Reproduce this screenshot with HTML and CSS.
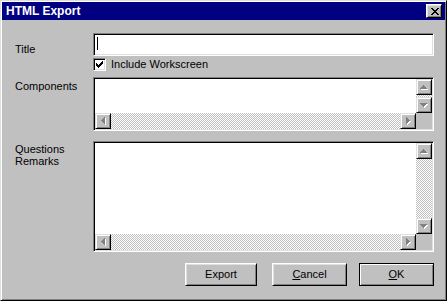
FILE: index.html
```html
<!DOCTYPE html>
<html>
<head>
<meta charset="utf-8">
<title>HTML Export</title>
<link rel="stylesheet" href="styles.css">
</head>
<body>
<div class="window">
  <div class="titlebar">
    <span class="title">HTML Export</span>
    <span class="close">
      <svg width="8" height="7" viewBox="0 0 8 7" shape-rendering="crispEdges"><path fill="#000" d="M0 0h2v1H0zM6 0h2v1H6zM1 1h2v1H1zM5 1h2v1H5zM2 2h4v1H2zM3 3h2v1H3zM2 4h4v1H2zM1 5h2v1H1zM5 5h2v1H5zM0 6h2v1H0zM6 6h2v1H6z"/></svg>
    </span>
  </div>
  <div class="form">
    <div class="row row-title">
      <span class="lbl lbl-title">Title</span>
      <div class="input"><span class="caret"></span></div>
    </div>
    <div class="row row-check">
      <span></span>
      <div class="check">
        <span class="checkbox">
          <svg width="7" height="7" viewBox="0 0 7 7" shape-rendering="crispEdges"><path fill="#000" d="M6 0h1v1H6zM5 1h2v1H5zM0 2h1v1H0zM4 2h3v1H4zM0 3h2v1H0zM3 3h3v1H3zM0 4h5v1H0zM1 5h3v1H1zM2 6h1v1H2z"/></svg>
        </span>
        <span class="check-label">Include Workscreen</span>
      </div>
    </div>
    <div class="row row-comp">
      <span class="lbl lbl-comp">Components</span>
      <div class="listbox comp">
        <div class="list-content"></div>
        <div class="vscroll">
          <span class="sbtn"><svg width="8" height="5" viewBox="0 0 8 5" shape-rendering="crispEdges"><path fill="#fff" d="M4 1h1v1H4zM3 2h3v1H3zM2 3h5v1H2zM1 4h7v1H1z"/><path fill="#808080" d="M3 0h1v1H3zM2 1h3v1H2zM1 2h5v1H1zM0 3h7v1H0z"/></svg></span>
          <span class="track"></span>
          <span class="sbtn"><svg width="8" height="5" viewBox="0 0 8 5" shape-rendering="crispEdges"><path fill="#fff" d="M1 1h7v1H1zM2 2h5v1H2zM3 3h3v1H3zM4 4h1v1H4z"/><path fill="#808080" d="M0 0h7v1H0zM1 1h5v1H1zM2 2h3v1H2zM3 3h1v1H3z"/></svg></span>
        </div>
        <div class="hscroll">
          <span class="sbtn"><svg width="5" height="8" viewBox="0 0 5 8" shape-rendering="crispEdges"><path fill="#fff" d="M4 1h1v1H4zM3 2h2v1H3zM2 3h3v1H2zM1 4h4v1H1zM2 5h3v1H2zM3 6h2v1H3zM4 7h1v1H4z"/><path fill="#808080" d="M3 0h1v1H3zM2 1h2v1H2zM1 2h3v1H1zM0 3h4v1H0zM1 4h3v1H1zM2 5h2v1H2zM3 6h1v1H3z"/></svg></span>
          <span class="track"></span>
          <span class="sbtn"><svg width="5" height="8" viewBox="0 0 5 8" shape-rendering="crispEdges"><path fill="#fff" d="M1 1h1v1H1zM1 2h2v1H1zM1 3h3v1H1zM1 4h4v1H1zM1 5h3v1H1zM1 6h2v1H1zM1 7h1v1H1z"/><path fill="#808080" d="M0 0h1v1H0zM0 1h2v1H0zM0 2h3v1H0zM0 3h4v1H0zM0 4h3v1H0zM0 5h2v1H0zM0 6h1v1H0z"/></svg></span>
        </div>
        <div class="corner"></div>
      </div>
    </div>
    <div class="row row-q">
      <span class="lbl lbl-q">Questions<br>Remarks</span>
      <div class="listbox remarks">
        <div class="list-content"></div>
        <div class="vscroll">
          <span class="sbtn"><svg width="8" height="5" viewBox="0 0 8 5" shape-rendering="crispEdges"><path fill="#fff" d="M4 1h1v1H4zM3 2h3v1H3zM2 3h5v1H2zM1 4h7v1H1z"/><path fill="#808080" d="M3 0h1v1H3zM2 1h3v1H2zM1 2h5v1H1zM0 3h7v1H0z"/></svg></span>
          <span class="track"></span>
          <span class="sbtn"><svg width="8" height="5" viewBox="0 0 8 5" shape-rendering="crispEdges"><path fill="#fff" d="M1 1h7v1H1zM2 2h5v1H2zM3 3h3v1H3zM4 4h1v1H4z"/><path fill="#808080" d="M0 0h7v1H0zM1 1h5v1H1zM2 2h3v1H2zM3 3h1v1H3z"/></svg></span>
        </div>
        <div class="hscroll">
          <span class="sbtn"><svg width="5" height="8" viewBox="0 0 5 8" shape-rendering="crispEdges"><path fill="#fff" d="M4 1h1v1H4zM3 2h2v1H3zM2 3h3v1H2zM1 4h4v1H1zM2 5h3v1H2zM3 6h2v1H3zM4 7h1v1H4z"/><path fill="#808080" d="M3 0h1v1H3zM2 1h2v1H2zM1 2h3v1H1zM0 3h4v1H0zM1 4h3v1H1zM2 5h2v1H2zM3 6h1v1H3z"/></svg></span>
          <span class="track"></span>
          <span class="sbtn"><svg width="5" height="8" viewBox="0 0 5 8" shape-rendering="crispEdges"><path fill="#fff" d="M1 1h1v1H1zM1 2h2v1H1zM1 3h3v1H1zM1 4h4v1H1zM1 5h3v1H1zM1 6h2v1H1zM1 7h1v1H1z"/><path fill="#808080" d="M0 0h1v1H0zM0 1h2v1H0zM0 2h3v1H0zM0 3h4v1H0zM0 4h3v1H0zM0 5h2v1H0zM0 6h1v1H0z"/></svg></span>
        </div>
        <div class="corner"></div>
      </div>
    </div>
  </div>
  <div class="buttons">
    <span class="btn btn-export">Export</span>
    <span class="btn btn-cancel"><u>C</u>ancel</span>
    <span class="btn btn-ok default"><u>O</u>K</span>
  </div>
</div>
</body>
</html>
```

FILE: styles.css
```css
html, body {
  margin: 0;
  padding: 0;
  background: #c0c0c0;
}

body {
  font-family: "Liberation Sans", Arial, sans-serif;
  font-size: 11px;
  color: #000;
}

.window {
  width: 447px;
  height: 301px;
  box-sizing: border-box;
  background: #c0c0c0;
  border: 1px solid;
  border-color: #dfdfdf #000 #000 #dfdfdf;
  box-shadow: inset 1px 1px #fff, inset -1px -1px #808080;
  padding: 1px;
  display: flex;
  flex-direction: column;
}

.titlebar {
  height: 18px;
  flex: none;
  background: #000080;
  color: #fff;
  display: flex;
  align-items: center;
  justify-content: space-between;
  padding: 0 3px 0 4px;
}

.title {
  font-weight: bold;
  font-size: 12px;
  line-height: 18px;
}

.close {
  width: 16px;
  height: 14px;
  box-sizing: border-box;
  background: #c0c0c0;
  border: 1px solid;
  border-color: #fff #000 #000 #fff;
  box-shadow: inset 1px 1px #dfdfdf, inset -1px -1px #808080;
  display: flex;
  align-items: center;
  justify-content: center;
  padding: 0 0 0 1px;
}

.close svg, .checkbox svg, .sbtn svg {
  display: block;
}

.form {
  padding-left: 13px;
  display: flex;
  flex-direction: column;
}

.row {
  display: grid;
  grid-template-columns: 78px 341px;
}

.lbl {
  line-height: 13px;
}

.row-title {
  margin-top: 13px;
}

.lbl-title {
  padding-top: 10px;
}

.input {
  height: 23px;
  box-sizing: border-box;
  background: #fff;
  border: 1px solid;
  border-color: #808080 #fff #fff #808080;
  box-shadow: inset 1px 1px #000, inset -1px -1px #dfdfdf;
  padding: 2px 2px 2px 3px;
}

.caret {
  display: block;
  width: 1px;
  height: 13px;
  margin-top: 1px;
  background: #000;
}

.row-check {
  margin-top: 2px;
}

.check {
  display: flex;
  align-items: center;
  height: 13px;
}

.checkbox {
  width: 13px;
  height: 13px;
  box-sizing: border-box;
  background: #fff;
  border: 1px solid;
  border-color: #808080 #fff #fff #808080;
  box-shadow: inset 1px 1px #000, inset -1px -1px #dfdfdf;
  padding: 2px;
  flex: none;
}

.check-label {
  margin-left: 5px;
  line-height: 13px;
}

.row-comp {
  margin-top: 6px;
}

.lbl-comp {
  padding-top: 3px;
}

.row-q {
  margin-top: 10px;
}

.lbl-q {
  padding-top: 2px;
  line-height: 12px;
}

.listbox {
  box-sizing: border-box;
  border: 1px solid;
  border-color: #808080 #fff #fff #808080;
  box-shadow: inset 1px 1px #000, inset -1px -1px #dfdfdf;
  padding: 1px;
  display: grid;
  grid-template-columns: 1fr 16px;
  grid-template-rows: 1fr 16px;
  background: #c0c0c0;
}

.listbox.comp {
  height: 54px;
}

.listbox.remarks {
  height: 111px;
}

.list-content {
  background: #fff;
}

.vscroll {
  display: flex;
  flex-direction: column;
}

.hscroll {
  display: flex;
}

.track {
  flex: 1;
  background-color: #fff;
  background-image: repeating-conic-gradient(#c0c0c0 0 25%, #fff 0 50%);
  background-size: 2px 2px;
}

.sbtn {
  width: 16px;
  height: 16px;
  box-sizing: border-box;
  flex: none;
  background: #c0c0c0;
  border: 1px solid;
  border-color: #dfdfdf #000 #000 #dfdfdf;
  box-shadow: inset 1px 1px #fff, inset -1px -1px #808080;
  display: flex;
  align-items: center;
  justify-content: center;
}

.corner {
  background: #c0c0c0;
}

.buttons {
  margin-top: 11px;
  display: flex;
  justify-content: flex-end;
  padding-right: 11px;
}

.btn {
  height: 23px;
  box-sizing: border-box;
  background: #c0c0c0;
  border: 1px solid;
  border-color: #fff #000 #000 #fff;
  box-shadow: inset 1px 1px #dfdfdf, inset -1px -1px #808080;
  display: flex;
  align-items: center;
  justify-content: center;
  line-height: 13px;
}

.btn u {
  text-underline-offset: 1px;
}

.btn-export {
  width: 72px;
  margin-right: 15px;
}

.btn-cancel {
  width: 75px;
  margin-right: 12px;
}

.btn-ok {
  width: 75px;
}

.btn.default {
  border-color: #000;
  box-shadow: inset 1px 1px #fff, inset -1px -1px #808080;
}
```
